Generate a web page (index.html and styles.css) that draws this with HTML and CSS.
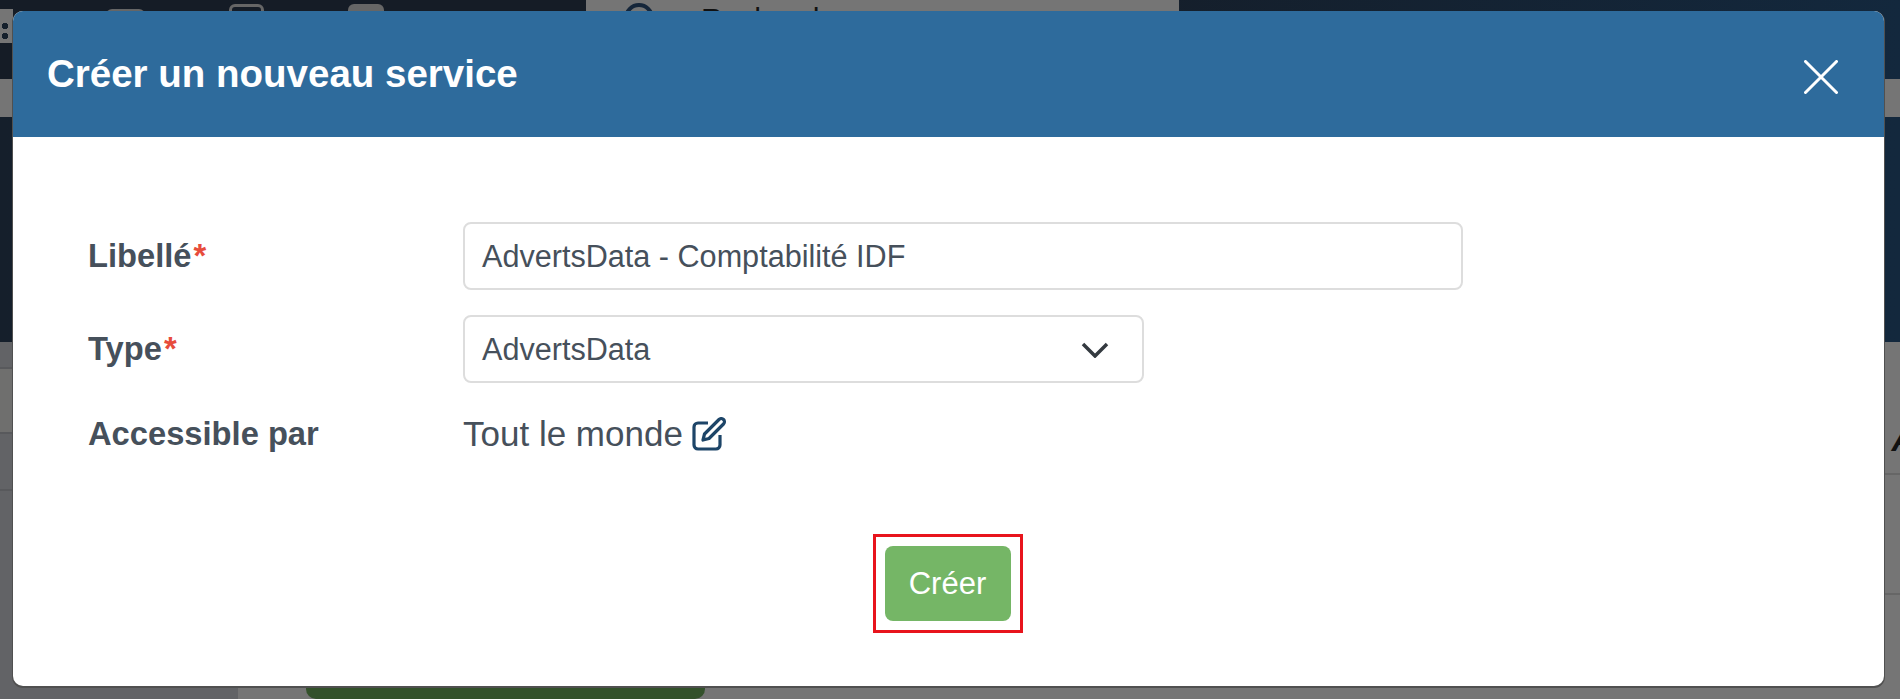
FILE: index.html
```html
<!DOCTYPE html>
<html lang="fr">
<head>
  <meta charset="UTF-8" />
  <meta name="viewport" content="width=device-width, initial-scale=1.0"/>
  <title>Créer un nouveau service</title>
  <link rel="stylesheet" href="styles.css">
</head>
<body>

  <!-- Page behind the overlay -->
  <div class="page">
    <div class="topbar">
      <div class="topbar-icons">
        <span class="dots"></span>
        <span class="tab-icon"></span>
        <span class="tab-icon tab-icon-outline"></span>
        <span class="tab-icon tab-icon-high"></span>
      </div>
      <div class="search">
        <span class="search-ring"></span>
        <span class="search-text">Rechercher</span>
      </div>
    </div>
    <div class="subbar"></div>
    <div class="topbar-rest"></div>
    <div class="content">
      <div class="sidebar">
        <div class="side-row side-row-light"></div>
        <div class="side-row"></div>
      </div>
      <div class="main">
        <div class="main-row"><span class="main-letter">A</span></div>
        <div class="main-row"></div>
        <div class="green-btn"></div>
      </div>
    </div>
  </div>

  <!-- Modal -->
  <div class="modal">
    <div class="modal-header">
      <h2>Créer un nouveau service</h2>
      <svg class="close-icon" viewBox="0 0 34 34">
        <path d="M1.500 1.500L32.500 32.500M32.500 1.500L1.500 32.500"/>
      </svg>
    </div>
    <div class="modal-body">
      <div class="form-row">
        <label>Libellé<span class="req">*</span></label>
        <div class="field field-wide">AdvertsData - Comptabilité IDF</div>
      </div>
      <div class="form-row">
        <label>Type<span class="req">*</span></label>
        <div class="field field-select">
          AdvertsData
          <svg class="chevron" viewBox="0 0 28 16">
            <path d="M2 2L14 14L26 2"/>
          </svg>
        </div>
      </div>
      <div class="form-row form-row-text">
        <label>Accessible par</label>
        <div class="access">
          Tout le monde
          <svg class="edit-icon" viewBox="0 0 34 34">
            <path class="edit-box" d="M16 6H6a4 4 0 0 0-4 4v18a4 4 0 0 0 4 4h18a4 4 0 0 0 4-4V18"/>
            <path class="edit-pen" d="M27 2.500a2.800 2.800 0 0 1 4.500 4.500L17 21.500l-6 1.500 1.500-6z"/>
          </svg>
        </div>
      </div>
      <div class="actions">
        <div class="highlight">
          <button class="btn-create">Créer</button>
        </div>
      </div>
    </div>
  </div>

</body>
</html>
```

FILE: styles.css
```css
* { box-sizing: border-box; }
html, body { margin: 0; height: 699px; overflow: hidden; }
body { font-family: "Liberation Sans", Arial, sans-serif; background: #757575; position: relative; }

.page { height: 699px; display: flex; flex-direction: column; }
.topbar { height: 79px; display: flex; background: linear-gradient(90deg, #151c26 0%, #151c26 50%, #13283d 100%); }
.topbar-icons { display: flex; width: 586px; }
.dots { width: 13px; height: 34px; margin: 9px 93px 0 0; background: radial-gradient(circle at 5px 17px, #15202c 3px, transparent 3.500px), radial-gradient(circle at 5px 27px, #15202c 3px, transparent 3.500px), #757575; }
.tab-icon { width: 39px; height: 11px; margin: 9px 84px 0 0; background: #666; border-radius: 6px 6px 0 0; }
.tab-icon-outline { width: 35px; height: 14px; margin-top: 4px; background: none; border: 3px solid #666; }
.tab-icon-high { width: 36px; height: 14px; margin-top: 4px; }
.search { width: 593px; height: 40px; background: #757575; display: flex; gap: 47px; padding-left: 38px; overflow: hidden; }
.search-ring { width: 30px; height: 30px; border: 4px solid #15263a; border-radius: 50%; margin-top: 3px; flex: none; }
.search-text { font-size: 30px; line-height: 36px; color: #111; margin-top: 1px; }
.subbar { height: 38px; background: #757575; }
.topbar-rest { height: 225px; background: linear-gradient(90deg, #151f2b 0%, #13283d 100%); }
.content { flex: 1; display: flex; }
.sidebar { width: 238px; background: #626366; }
.side-row { height: 57px; border-bottom: 2px solid #58595c; }
.side-row-light { height: 67px; background: #6f6f6e; margin-top: 25px; border-top: 2px solid #58595c; }
.main { flex: 1; position: relative; }
.main-row { height: 120px; border-bottom: 2px solid #666; }
.main-row:first-child { height: 133px; }
.main-letter { display: block; text-align: right; font-size: 34px; font-weight: bold; font-style: italic; color: #111; padding-top: 78px; margin-right: -16px; }
.green-btn { position: absolute; left: 68px; bottom: 0; width: 399px; height: 13px; background: #33512b; border-radius: 0 0 10px 10px; }

/* lies over the page */
.modal { position: absolute; left: 13px; top: 11px; width: 1871px; height: 675px; background: #fff; border-radius: 10px; box-shadow: 0 1px 0 1px #505050; overflow: hidden; }
.modal-header { height: 126px; background: #2e6b9c; color: #fff; display: flex; align-items: center; justify-content: space-between; padding: 0 46px 0 34px; }
.modal-header h2 { margin: 0; font-size: 38.500px; font-weight: bold; }
.close-icon { width: 34px; height: 34px; margin-top: 6px; }
.close-icon path { fill: none; stroke: #fff; stroke-width: 3; stroke-linecap: round; }

.modal-body { padding: 85px 0 0 75px; }
.form-row { display: flex; align-items: center; height: 68px; margin-bottom: 25px; color: #46505b; }
.form-row label { width: 375px; font-weight: bold; font-size: 32.700px; color: #46505b; }
.req { color: #e74c3c; margin-left: 2px; }
.field { height: 68px; border: 2px solid #ddd; border-radius: 8px; padding: 0 17px; display: flex; align-items: center; font-size: 30.600px; color: #46505b; }
.field-wide { width: 1000px; }
.field-select { width: 681px; justify-content: space-between; padding-right: 33px; }
.chevron { width: 28px; height: 16px; margin-top: 1px; }
.chevron path { fill: none; stroke: #343a40; stroke-width: 3.500; }
.form-row-text { height: 40px; margin: 31px 0 0; }
.access { display: flex; align-items: center; gap: 9px; font-size: 35px; color: #46505b; }
.edit-icon { width: 34px; height: 34px; }
.edit-box, .edit-pen { fill: none; stroke: #1d4568; stroke-width: 3.200; stroke-linejoin: round; }

.actions { display: flex; justify-content: center; padding: 80px 77px 0 0; }
.highlight { width: 150px; height: 99px; border: 3px solid #e8141c; display: flex; align-items: center; justify-content: center; }
.btn-create { width: 126px; height: 75px; border: 0; border-radius: 8px; background: #75b666; color: #fff; font-family: inherit; font-size: 31px; }
```
